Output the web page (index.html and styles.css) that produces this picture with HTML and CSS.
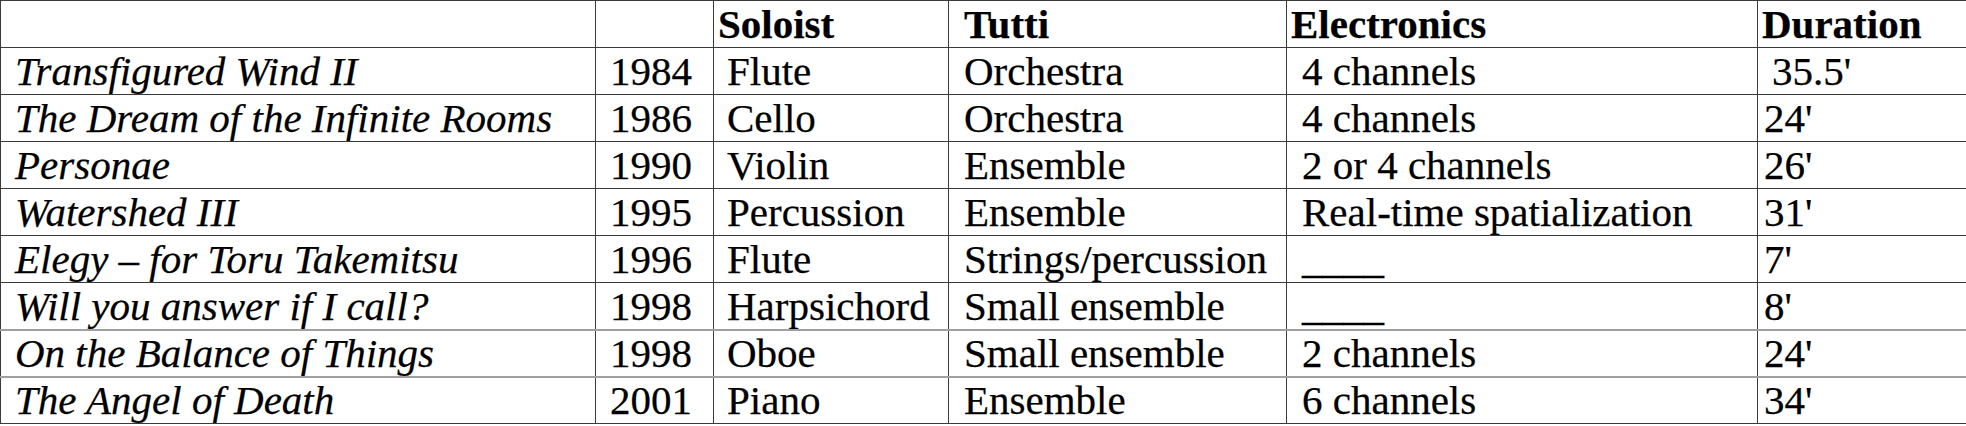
FILE: index.html
```html
<!DOCTYPE html>
<html lang="en">
<head>
<meta charset="utf-8">
<title>Works</title>
<link rel="stylesheet" href="styles.css">
</head>
<body>
<table class="works">
  <colgroup>
    <col class="c-title">
    <col class="c-year">
    <col class="c-solo">
    <col class="c-tutti">
    <col class="c-elec">
    <col class="c-dur">
  </colgroup>
  <thead>
    <tr>
      <th class="title"></th>
      <th class="year"></th>
      <th class="solo">Soloist</th>
      <th class="tutti">Tutti</th>
      <th class="elec">Electronics</th>
      <th class="dur">Duration</th>
    </tr>
  </thead>
  <tbody>
    <tr>
      <td class="title">Transfigured Wind II</td>
      <td class="year">1984</td>
      <td class="solo">Flute</td>
      <td class="tutti">Orchestra</td>
      <td class="elec">4 channels</td>
      <td class="dur indent">35.5'</td>
    </tr>
    <tr>
      <td class="title">The Dream of the Infinite Rooms</td>
      <td class="year">1986</td>
      <td class="solo">Cello</td>
      <td class="tutti">Orchestra</td>
      <td class="elec">4 channels</td>
      <td class="dur">24'</td>
    </tr>
    <tr>
      <td class="title">Personae</td>
      <td class="year">1990</td>
      <td class="solo">Violin</td>
      <td class="tutti">Ensemble</td>
      <td class="elec">2 or 4 channels</td>
      <td class="dur">26'</td>
    </tr>
    <tr>
      <td class="title">Watershed III</td>
      <td class="year">1995</td>
      <td class="solo">Percussion</td>
      <td class="tutti">Ensemble</td>
      <td class="elec">Real-time spatialization</td>
      <td class="dur">31'</td>
    </tr>
    <tr>
      <td class="title">Elegy – for Toru Takemitsu</td>
      <td class="year">1996</td>
      <td class="solo">Flute</td>
      <td class="tutti">Strings/percussion</td>
      <td class="elec">____</td>
      <td class="dur">7'</td>
    </tr>
    <tr>
      <td class="title">Will you answer if I call?</td>
      <td class="year">1998</td>
      <td class="solo">Harpsichord</td>
      <td class="tutti">Small ensemble</td>
      <td class="elec">____</td>
      <td class="dur">8'</td>
    </tr>
    <tr class="soft">
      <td class="title">On the Balance of Things</td>
      <td class="year">1998</td>
      <td class="solo">Oboe</td>
      <td class="tutti">Small ensemble</td>
      <td class="elec">2 channels</td>
      <td class="dur">24'</td>
    </tr>
    <tr class="soft">
      <td class="title">The Angel of Death</td>
      <td class="year">2001</td>
      <td class="solo">Piano</td>
      <td class="tutti">Ensemble</td>
      <td class="elec">6 channels</td>
      <td class="dur">34'</td>
    </tr>
  </tbody>
</table>
</body>
</html>
```

FILE: styles.css
```css
html, body {
  margin: 0;
  padding: 0;
  background: #ffffff;
}

.works {
  border-collapse: collapse;
  table-layout: fixed;
  width: 1966px;
  font-family: "Liberation Serif", "Times New Roman", serif;
  font-size: 41px;
  color: #000000;
  -webkit-text-stroke: 0.25px #000000;
}

.works th,
.works td {
  border: 1px solid #3a3a3a;
  height: 46px;
  line-height: 46px;
  padding: 0;
  white-space: nowrap;
  text-align: left;
  vertical-align: middle;
  overflow: hidden;
}

.works tr.soft td {
  border-top: 2px solid #a0a0a0;
  height: 45px;
  line-height: 45px;
}

.c-title { width: 595px; }
.c-year { width: 118px; }
.c-solo { width: 235px; }
.c-tutti { width: 338px; }
.c-elec { width: 471px; }
.c-dur { width: 209px; }

.works th {
  font-weight: bold;
  padding-left: 4px;
}

.works td.title {
  font-style: italic;
  padding-left: 14px;
}

.works td.year {
  text-align: right;
  padding-right: 21px;
}

.works td.solo {
  padding-left: 13px;
}

.works th.tutti,
.works td.tutti {
  padding-left: 15px;
}

.works td.elec {
  padding-left: 15px;
}

.works td.dur {
  padding-left: 6px;
}

.works td.dur.indent {
  padding-left: 14px;
}
```
